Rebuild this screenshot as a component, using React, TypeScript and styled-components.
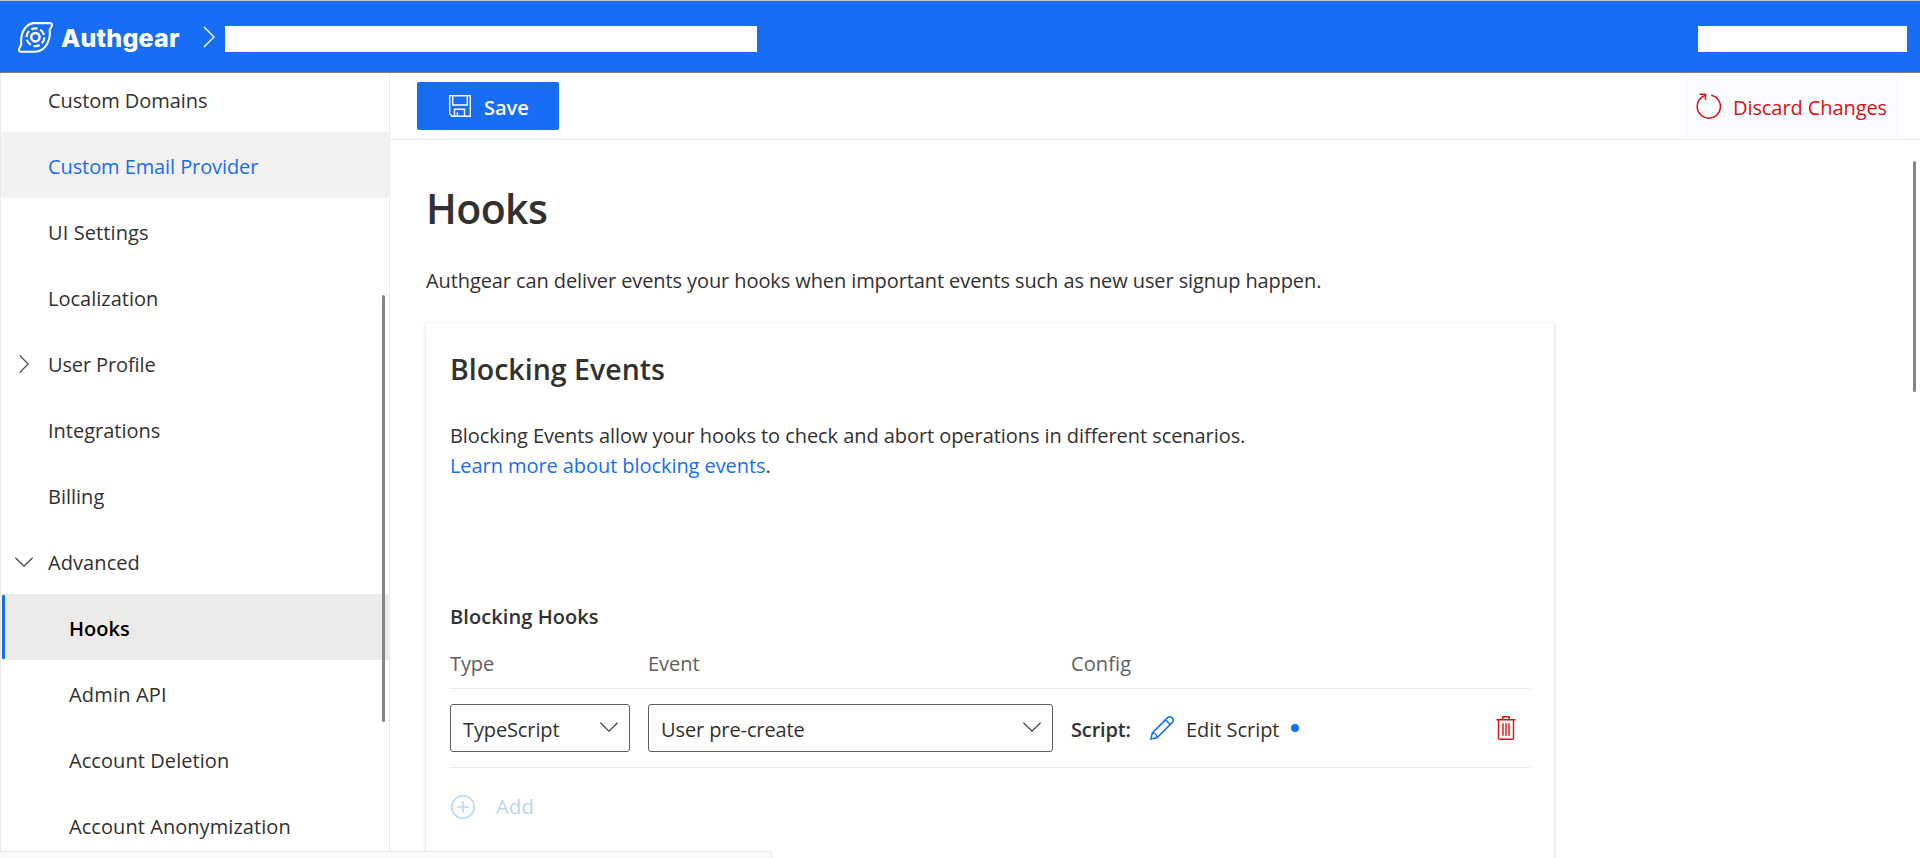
import React from "react";
import styled, { createGlobalStyle } from "styled-components";

const GlobalStyle = createGlobalStyle`
  * { box-sizing: border-box; }
  html, body { margin: 0; height: 858px; overflow: hidden; background: #fff; }
  body { font-family: "Open Sans", "Noto Sans", sans-serif; font-size: 20px; color: #323130; }
`;

const Page = styled.div`
  position: relative;
  display: flex;
  flex-direction: column;
  width: 1920px;
  height: 858px;
  overflow: hidden;
`;

const Header = styled.header`
  flex: none;
  display: flex;
  align-items: center;
  height: 73px;
  padding: 5px 13px 0 18px;
  background: #176df3;
  border-top: 1px solid #c8c8c8;
  border-bottom: 1px solid #777c84;
  color: #fff;
`;

const Logo = styled.svg`
  margin-top: -4px;
`;

const Brand = styled.span`
  width: 120px;
  margin: -3px 0 0 8px;
  font: 800 25px/30px Inter, sans-serif;
  letter-spacing: 0.2px;
  white-space: nowrap;
`;

const HeaderChevron = styled.svg`
  margin: -5px 9px 0 22px;
`;

const Mask = styled.div<{ $width: number; $end?: boolean }>`
  width: ${(p) => p.$width}px;
  height: 26px;
  margin-left: ${(p) => (p.$end ? "auto" : "0")};
  background: #fff;
`;

const Body = styled.div`
  flex: 1;
  display: flex;
  min-height: 0;
`;

const Sidebar = styled.nav`
  position: relative;
  flex: none;
  width: 390px;
  border: solid #ebebeb;
  border-width: 0 1px;
  overflow: hidden;
`;

const NavList = styled.div`
  margin-top: -7px;
`;

const NavItem = styled.div<{ $state?: "hover" | "active"; $sub?: boolean }>`
  display: flex;
  align-items: center;
  height: 66px;
  padding: 2px 0 0 ${(p) => (p.$sub ? 68 : 11)}px;
  border-radius: 3px;
  background: ${(p) => (p.$state === "active" ? "#edebe9" : p.$state === "hover" ? "#f3f2f1" : "transparent")};
  color: ${(p) => (p.$state === "active" ? "#000" : p.$state === "hover" ? "#176df3" : "#323130")};
  font-weight: ${(p) => (p.$state === "active" ? 600 : 400)};
`;

const ActiveBar = styled.i`
  width: 3px;
  height: 64px;
  margin: -2px 64px 0 -67px;
  border-radius: 1px;
  background: #176df3;
`;

const NavIcon = styled.span`
  display: flex;
  justify-content: center;
  width: 23px;
  margin-right: 13px;
`;

const Text = styled.span<{ $ls?: number }>`
  letter-spacing: ${(p) => p.$ls ?? 0}px;
  white-space: nowrap;
`;

const Thumb = styled.div<{ $x: number; $y: number; $h: number }>`
  position: absolute;
  left: ${(p) => p.$x}px;
  top: ${(p) => p.$y}px;
  width: 3px;
  height: ${(p) => p.$h}px;
  border-radius: 2px;
  background: #858585;
`;

const Main = styled.main`
  flex: 1;
  min-width: 0;
`;

const CommandBar = styled.div`
  display: flex;
  align-items: center;
  justify-content: space-between;
  height: 67px;
  padding: 0 21px 0 27px;
  border-bottom: 1px solid #eaeaea;
`;

const SaveButton = styled.button`
  display: flex;
  align-items: center;
  gap: 13px;
  width: 142px;
  height: 48px;
  padding: 2px 0 0 32px;
  border: 0;
  border-radius: 2px;
  background: #176df3;
  color: #fff;
  font: inherit;
  font-weight: 600;

  svg { margin-top: -2px; }
`;

const DiscardButton = styled.button`
  display: flex;
  align-items: center;
  align-self: flex-end;
  gap: 12px;
  width: 214px;
  height: 64px;
  padding: 0 0 0 11px;
  border: 0;
  background: #fafcff;
  color: #da0f0f;
  font: inherit;

  svg { margin-top: -3px; }
`;

const Content = styled.div`
  padding: 37px 0 0 36px;
`;

const Title = styled.h1`
  margin: 0;
  font-size: 41px;
  font-weight: 600;
  line-height: 62px;
`;

const Description = styled.p`
  margin: 27px 0 0;
  line-height: 30px;
`;

const Card = styled.section`
  width: 1128px;
  height: 600px;
  margin-top: 27px;
  padding: 23px 24px 24px;
  border-radius: 2px;
  box-shadow: 0 2px 5px rgba(0, 0, 0, 0.13), 0 0 2px rgba(0, 0, 0, 0.11);
`;

const CardTitle = styled.h2`
  margin: 0;
  font-size: 28.5px;
  font-weight: 600;
  line-height: 46px;
`;

const Paragraph = styled.p`
  margin: 29px 0 0;
  line-height: 30px;
`;

const Link = styled.a`
  color: #176df3;
`;

const TableTitle = styled.h3`
  margin: 120px 0 0;
  font-size: 20px;
  font-weight: 600;
  line-height: 32px;
`;

const Row = styled.div<{ $head?: boolean }>`
  display: grid;
  grid-template-columns: 180px 405px 1fr 49px;
  column-gap: 18px;
  align-items: center;
  height: ${(p) => (p.$head ? 56 : 79)}px;
  padding-top: ${(p) => (p.$head ? 5 : 0)}px;
  border-bottom: 1px solid #eaeaea;
  color: ${(p) => (p.$head ? "#605e5c" : "inherit")};
`;

const Select = styled.div`
  display: flex;
  align-items: center;
  justify-content: space-between;
  height: 48px;
  padding: 2px 11px 0 12px;
  border: 1px solid #605e5c;
  border-radius: 3px;

  svg { margin-top: -4px; }
`;

const ConfigCell = styled.div`
  display: flex;
  align-items: center;
  padding-top: 2px;
`;

const Strong = styled(Text)`
  font-weight: 600;
`;

const PencilIcon = styled.svg`
  margin: -3px 12px 0 19px;
`;

const Dot = styled.i`
  width: 8px;
  height: 8px;
  margin: -2px 0 0 12px;
  border-radius: 50%;
  background: #176df3;
`;

const TrashIcon = styled.svg`
  justify-self: center;
`;

const AddButton = styled.div`
  display: flex;
  align-items: center;
  gap: 21px;
  height: 77px;
  padding-left: 1px;
  color: #b9d3fb;
`;

const StatusBar = styled.div`
  position: absolute;
  left: 0;
  bottom: 0;
  width: 772px;
  height: 7px;
  border: solid #e8e8e8;
  border-width: 1px 1px 0 0;
  background: #fafafa;
`;

const Chevron = ({ down }: { down?: boolean }) =>
  down ? (
    <svg width="18" height="10" viewBox="0 0 18 10" fill="none" stroke="#454443" strokeWidth="1.2">
      <path d="M.4.7 9 9.2 17.6.7" />
    </svg>
  ) : (
    <svg width="10" height="18" viewBox="0 0 10 18" fill="none" stroke="#454443" strokeWidth="1.2">
      <path d="M.7.4 9.2 9 .7 17.6" />
    </svg>
  );

type Nav = { label: string; ls: number; icon?: "right" | "down"; sub?: boolean; state?: "hover" | "active" };

const navItems: Nav[] = [
  { label: "Custom Domains", ls: -0.06 },
  { label: "Custom Email Provider", ls: -0.09, state: "hover" },
  { label: "UI Settings", ls: 0.1 },
  { label: "Localization", ls: 0 },
  { label: "User Profile", ls: -0.12 },
  { label: "Integrations", ls: 0 },
  { label: "Billing", ls: 0 },
  { label: "Advanced", ls: 0.08, icon: "down" },
  { label: "Hooks", ls: 0, sub: true, state: "active" },
  { label: "Admin API", ls: 0.18, sub: true },
  { label: "Account Deletion", ls: 0.07, sub: true },
  { label: "Account Anonymization", ls: 0.06, sub: true },
];
navItems[4].icon = "right";

export default function App() {
  return (
    <Page>
      <GlobalStyle />
      <Header>
        <Logo width="35" height="31" viewBox="0 0 35 31" fill="none" stroke="#fff" strokeWidth="2.1">
          <path d="M15.5 1.1H32.2Q34.6 1.4 33.8 3.8L31.6 8.1Q32.8 16 29 22.2 24.6 29.5 16.6 29.8H2.8Q.3 29.4 1.2 26.8L3.3 22.3Q2.4 12.6 6.7 6.6 10.4 1.4 15.5 1.1Z" />
          <circle cx="17.4" cy="15.2" r="4.2" strokeWidth="2.5" />
          <circle cx="17.4" cy="15.2" r="8.9" strokeDasharray="6.6 2.72" strokeWidth="2.2" />
        </Logo>
        <Brand>Authgear</Brand>
        <HeaderChevron width="13" height="22" viewBox="0 0 13 22" fill="none" stroke="#fff" strokeWidth="1.4">
          <path d="M1 1 11 11 1 21" />
        </HeaderChevron>
        <Mask $width={532} />
        <Mask $width={209} $end />
      </Header>
      <Body>
        <Sidebar>
          <NavList>
            {navItems.map((n) => (
              <NavItem key={n.label} $state={n.state} $sub={n.sub}>
                {n.state === "active" && <ActiveBar />}
                {!n.sub && <NavIcon>{n.icon && <Chevron down={n.icon === "down"} />}</NavIcon>}
                <Text $ls={n.ls}>{n.label}</Text>
              </NavItem>
            ))}
          </NavList>
          <Thumb $x={381} $y={222} $h={427} />
        </Sidebar>
        <Main>
          <CommandBar>
            <SaveButton>
              <svg width="22" height="22" viewBox="0 0 22 22" fill="none" stroke="#fff" strokeWidth="1.4">
                <path d="M.7.7H21.3V21.3H3.2L.7 18.8ZM3.7.7V10H18.3V.7M5.5 21V14.3H15.5V21M8.4 21V17.2" />
              </svg>
              <Text>Save</Text>
            </SaveButton>
            <DiscardButton>
              <svg width="25" height="26" viewBox="0 0 25 26" fill="none" stroke="#da0f0f" strokeWidth="1.5">
                <path d="M15.2 2.2A11.6 11.6 0 1 1 7.6 3.2L9.3 1.6M3.5 1.3H9.5V7" />
              </svg>
              <Text $ls={-0.08}>Discard Changes</Text>
            </DiscardButton>
          </CommandBar>
          <Content>
            <Title><Text $ls={-0.6}>Hooks</Text></Title>
            <Description>
              <Text $ls={-0.096}>Authgear can deliver events your hooks when important events such as new user signup happen.</Text>
            </Description>
            <Card>
              <CardTitle><Text $ls={0.02}>Blocking Events</Text></CardTitle>
              <Paragraph>
                <Text $ls={-0.063}>Blocking Events allow your hooks to check and abort operations in different scenarios.</Text>
                <br />
                <Text $ls={-0.07}><Link>Learn more about blocking events</Link>.</Text>
              </Paragraph>
              <TableTitle><Text $ls={0.08}>Blocking Hooks</Text></TableTitle>
              <Row $head>
                <Text $ls={-0.1}>Type</Text>
                <Text>Event</Text>
                <Text $ls={0.1}>Config</Text>
              </Row>
              <Row>
                <Select><Text $ls={-0.12}>TypeScript</Text><Chevron down /></Select>
                <Select><Text $ls={-0.1}>User pre-create</Text><Chevron down /></Select>
                <ConfigCell>
                  <Strong $ls={-0.15}>Script:</Strong>
                  <PencilIcon width="24" height="24" viewBox="0 0 24 24" fill="none" stroke="#176df3" strokeWidth="1.5">
                    <path d="M.9 23.1 2.3 17 17.4 1.9A3.3 3.3 0 0 1 22.1 6.6L7 21.7ZM2.3 17A4.7 4.7 0 0 1 7 21.7M15.5 3.8 20.2 8.5" />
                  </PencilIcon>
                  <Text $ls={-0.03}>Edit Script</Text>
                  <Dot />
                </ConfigCell>
                <TrashIcon width="20" height="24" viewBox="0 0 20 24" fill="none" stroke="#da0f0f" strokeWidth="1.4">
                  <path d="M.5 3.8H19.5M6.8 3.5V.8H13.2V3.5M2.5 3.8V22Q2.5 23.2 3.7 23.2H16.3Q17.5 23.2 17.5 22V3.8M7 7.2V19.8M10 7.2V19.8M13 7.2V19.8" />
                </TrashIcon>
              </Row>
              <AddButton>
                <svg width="24" height="24" viewBox="0 0 24 24" fill="none" stroke="#b9d3fb" strokeWidth="1.5">
                  <circle cx="12" cy="12" r="11.2" />
                  <path d="M12 6V18M6 12H18" />
                </svg>
                <Text $ls={0.3}>Add</Text>
              </AddButton>
            </Card>
          </Content>
        </Main>
      </Body>
      <Thumb $x={1913} $y={161} $h={231} />
      <StatusBar />
    </Page>
  );
}
